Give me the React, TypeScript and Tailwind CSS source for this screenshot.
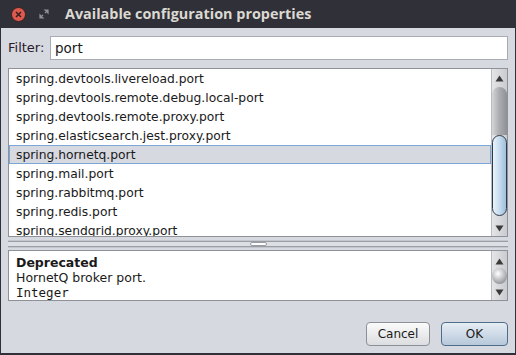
import React from "react";

const items = [
  "spring.devtools.livereload.port",
  "spring.devtools.remote.debug.local-port",
  "spring.devtools.remote.proxy.port",
  "spring.elasticsearch.jest.proxy.port",
  "spring.hornetq.port",
  "spring.mail.port",
  "spring.rabbitmq.port",
  "spring.redis.port",
  "spring.sendgrid.proxy.port",
];

const UpArrow = () => (
  <svg width="9" height="7" viewBox="0 0 9 7">
    <path d="M4.5 0.5 L8.5 6.5 L0.5 6.5 Z" fill="#3a3a3a" />
  </svg>
);

const DownArrow = () => (
  <svg width="9" height="7" viewBox="0 0 9 7">
    <path d="M0.5 0.5 L8.5 0.5 L4.5 6.5 Z" fill="#3a3a3a" />
  </svg>
);

const ListScrollbar = () => (
  <div className="flex w-[16px] flex-col border-l border-[#b9bcc2] bg-gradient-to-r from-[#e4e5e7] to-[#c9cbcf]">
    <div className="flex h-[18px] items-center justify-center">
      <UpArrow />
    </div>
    <div className="h-[48px] rounded-t-[10px] bg-gradient-to-r from-[#d5d6d8] via-[#a9abaf] to-[#8f9196]" />
    <div className="h-[81px] rounded-[8px] border border-[#2f3a48] bg-gradient-to-r from-[#eaf3fb] via-[#c6dcef] to-[#9fbfdb]" />
    <div className="flex-1" />
    <div className="flex h-[16px] items-center justify-center">
      <DownArrow />
    </div>
  </div>
);

const DescScrollbar = () => (
  <div className="flex w-[16px] flex-col items-center border-l border-[#b9bcc2] bg-gradient-to-r from-[#e4e5e7] to-[#c9cbcf]">
    <div className="flex h-[14px] items-end justify-center">
      <UpArrow />
    </div>
    <div className="mt-[3px] h-[16px] w-[15px] rounded-full bg-[radial-gradient(circle_at_40%_35%,#ffffff,#9c9ea3_70%,#6f7176)]" />
    <div className="flex flex-1 items-center justify-center">
      <DownArrow />
    </div>
  </div>
);

export default function App() {
  return (
    <div className="flex h-[355px] w-[516px] flex-col overflow-hidden bg-[#2f3038] font-['DejaVu_Sans',sans-serif] text-[12px] text-[#1a1a1a]">
      <div className="flex h-[28px] shrink-0 items-center">
        <div className="ml-[11px] flex h-[15px] w-[15px] items-center justify-center rounded-full border border-[#3a1f1f] bg-[#df5a4e]">
          <svg width="7" height="7" viewBox="0 0 7 7">
            <path d="M1 1 L6 6 M6 1 L1 6" stroke="#3a2020" strokeWidth="1.6" />
          </svg>
        </div>
        <div className="ml-[10px] flex h-[15px] w-[15px] items-center justify-center">
          <svg width="10" height="10" viewBox="0 0 10 10">
            <path d="M6 1 L9 1 L9 4 Z M1 6 L1 9 L4 9 Z M8.5 1.5 L6 4 M1.5 8.5 L4 6" stroke="#8e9096" strokeWidth="1.2" fill="#8e9096" />
          </svg>
        </div>
        <div className="ml-[14px] font-['Open_Sans',sans-serif] text-[14.4px] font-bold text-[#dcd9d2]">
          Available configuration properties
        </div>
      </div>

      <div className="mx-px mb-[2px] flex flex-1 flex-col bg-[#d6d9df] px-[7px]">
        <div className="mt-[8px] flex h-[24px] items-center">
          <span className="w-[42px] text-[13px] text-[#2a1a2a]">Filter:</span>
          <div className="flex h-[24px] flex-1 items-center border border-[#a8abb1] bg-white pl-[4px] text-[13.5px]">
            port
          </div>
        </div>

        <div className="mt-[8px] flex h-[169px] border border-[#8e9198] bg-white">
          <div className="flex-1 overflow-hidden text-[12.3px]">
            {items.map((item, i) => (
              <div
                key={item}
                className={
                  i === 4
                    ? "flex h-[19px] items-center border border-[#7ba7d6] bg-[#d6d9df] pl-[6px] pt-[2px]"
                    : "flex h-[19px] items-center pl-[7px] pt-[2px]"
                }
              >
                {item}
              </div>
            ))}
          </div>
          <ListScrollbar />
        </div>

        <div className="flex h-[13px] flex-col justify-center">
          <div className="h-px bg-[#c3c6cc]" />
          <div className="flex h-[6px] items-center justify-center border-y border-[#9a9da4] bg-[#dcdfe4]">
            <div className="h-[4px] w-[17px] rounded-[2px] border border-[#9a9da4] bg-white" />
          </div>
          <div className="h-px bg-[#c3c6cc]" />
        </div>

        <div className="flex h-[51px] border border-[#8e9198] bg-white">
          <div className="flex-1 pl-[7px] pt-[4px] text-[12.5px] leading-[15px]">
            <div className="font-bold">Deprecated</div>
            <div>HornetQ broker port.</div>
            <div className="font-['DejaVu_Sans_Mono',monospace]">Integer</div>
          </div>
          <DescScrollbar />
        </div>

        <div className="mt-[21px] flex justify-end gap-[11px]">
          <button className="flex h-[24px] w-[64px] items-center justify-center rounded-[4px] border border-[#8d9096] bg-gradient-to-b from-[#fbfbfb] to-[#dcdde0] text-[12px] text-[#1a1a1a]">
            Cancel
          </button>
          <button className="flex h-[24px] w-[67px] items-center justify-center rounded-[4px] border border-[#4f6c8c] bg-gradient-to-b from-[#e6edf4] to-[#b7c8da] text-[12px] text-[#1a1a1a]">
            OK
          </button>
        </div>
      </div>
    </div>
  );
}
